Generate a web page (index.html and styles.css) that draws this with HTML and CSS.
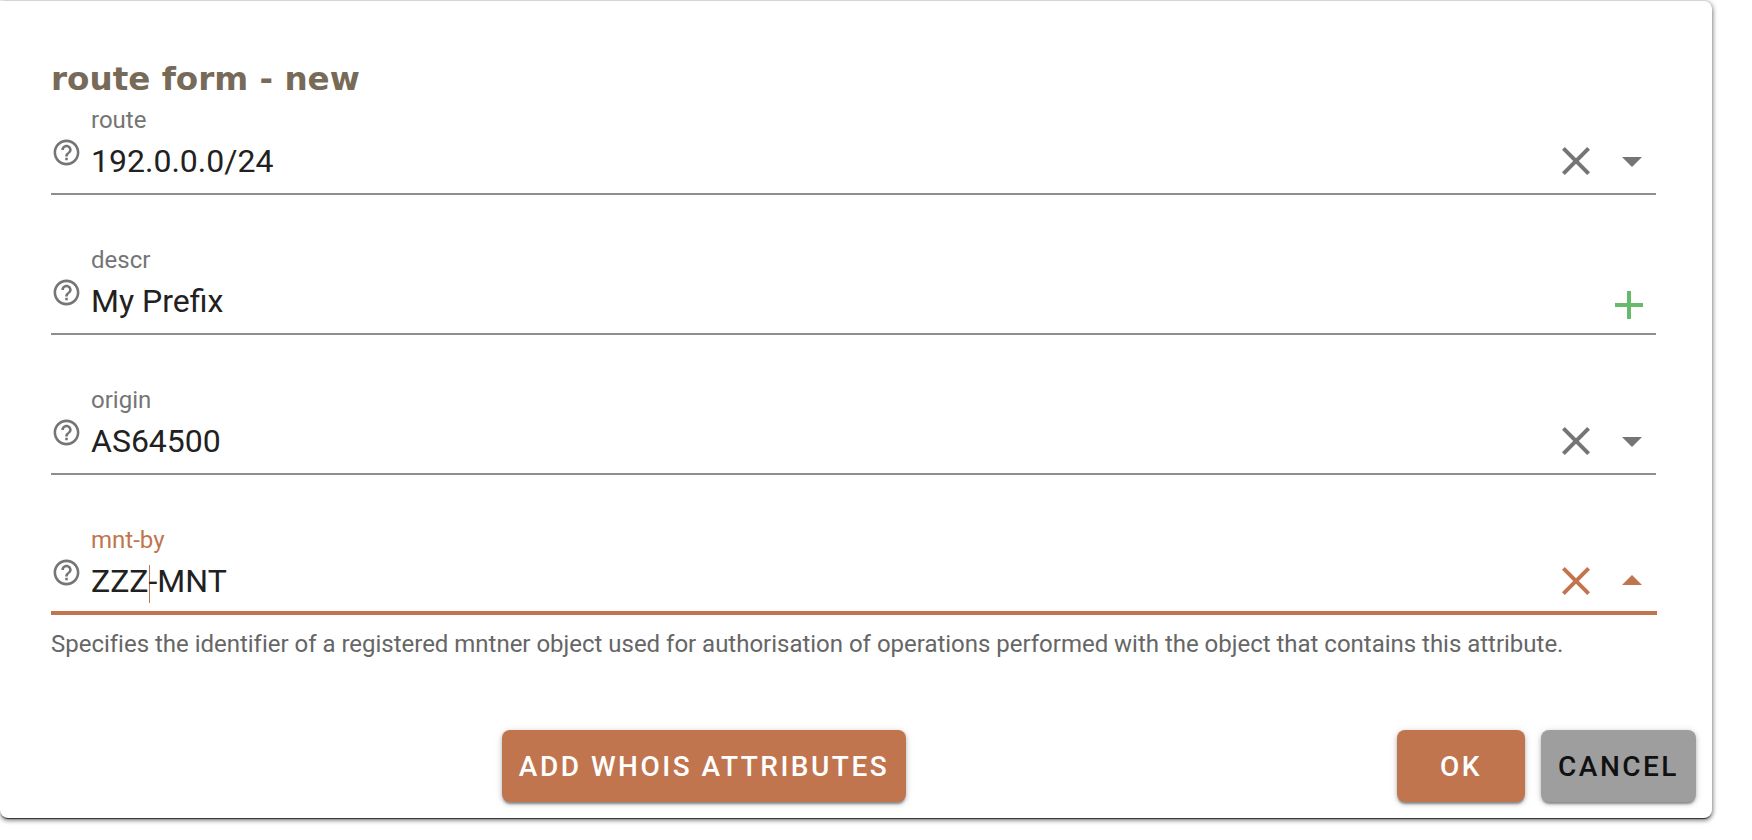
FILE: index.html
```html
<!DOCTYPE html>
<html lang="en">
<head>
<meta charset="utf-8">
<title>route form - new</title>
<link rel="stylesheet" href="styles.css">
</head>
<body>
<main class="card">
  <h2 class="title">route form - new</h2>
  <form class="form">
    <div class="field">
      <svg class="help" viewBox="0 0 24 24"><path d="M11 18h2v-2h-2v2zm1-16C6.48 2 2 6.48 2 12s4.48 10 10 10 10-4.48 10-10S17.52 2 12 2zm0 18c-4.41 0-8-3.59-8-8s3.59-8 8-8 8 3.59 8 8-3.59 8-8 8zm0-14c-2.21 0-4 1.79-4 4h2c0-1.1.9-2 2-2s2 .9 2 2c0 2-3 1.75-3 5h2c0-2.25 3-2.5 3-5 0-2.21-1.79-4-4-4z"/></svg>
      <div class="body">
        <div class="label">route</div>
        <div class="value-row">
          <span class="value">192.0.0.0/24</span>
          <svg class="icon" viewBox="0 0 24 24"><path d="M19 6.41L17.59 5 12 10.59 6.41 5 5 6.41 10.59 12 5 17.59 6.41 19 12 13.41 17.59 19 19 17.59 13.41 12z"/></svg>
          <svg class="icon arrow" viewBox="0 0 24 24"><path d="M7 10l5 5 5-5z"/></svg>
        </div>
      </div>
    </div>
    <div class="field">
      <svg class="help" viewBox="0 0 24 24"><path d="M11 18h2v-2h-2v2zm1-16C6.48 2 2 6.48 2 12s4.48 10 10 10 10-4.48 10-10S17.52 2 12 2zm0 18c-4.41 0-8-3.59-8-8s3.59-8 8-8 8 3.59 8 8-3.59 8-8 8zm0-14c-2.21 0-4 1.79-4 4h2c0-1.1.9-2 2-2s2 .9 2 2c0 2-3 1.75-3 5h2c0-2.25 3-2.5 3-5 0-2.21-1.79-4-4-4z"/></svg>
      <div class="body">
        <div class="label">descr</div>
        <div class="value-row">
          <span class="value">My Prefix</span>
          <svg class="icon plus" viewBox="0 0 24 24"><path d="M19 13h-6v6h-2v-6H5v-2h6V5h2v6h6v2z"/></svg>
        </div>
      </div>
    </div>
    <div class="field">
      <svg class="help" viewBox="0 0 24 24"><path d="M11 18h2v-2h-2v2zm1-16C6.48 2 2 6.48 2 12s4.48 10 10 10 10-4.48 10-10S17.52 2 12 2zm0 18c-4.41 0-8-3.59-8-8s3.59-8 8-8 8 3.59 8 8-3.59 8-8 8zm0-14c-2.21 0-4 1.79-4 4h2c0-1.1.9-2 2-2s2 .9 2 2c0 2-3 1.75-3 5h2c0-2.25 3-2.5 3-5 0-2.21-1.79-4-4-4z"/></svg>
      <div class="body">
        <div class="label">origin</div>
        <div class="value-row">
          <span class="value">AS64500</span>
          <svg class="icon" viewBox="0 0 24 24"><path d="M19 6.41L17.59 5 12 10.59 6.41 5 5 6.41 10.59 12 5 17.59 6.41 19 12 13.41 17.59 19 19 17.59 13.41 12z"/></svg>
          <svg class="icon arrow" viewBox="0 0 24 24"><path d="M7 10l5 5 5-5z"/></svg>
        </div>
      </div>
    </div>
    <div class="field focused">
      <svg class="help" viewBox="0 0 24 24"><path d="M11 18h2v-2h-2v2zm1-16C6.48 2 2 6.48 2 12s4.48 10 10 10 10-4.48 10-10S17.52 2 12 2zm0 18c-4.41 0-8-3.59-8-8s3.59-8 8-8 8 3.59 8 8-3.59 8-8 8zm0-14c-2.21 0-4 1.79-4 4h2c0-1.1.9-2 2-2s2 .9 2 2c0 2-3 1.75-3 5h2c0-2.25 3-2.5 3-5 0-2.21-1.79-4-4-4z"/></svg>
      <div class="body">
        <div class="label">mnt-by</div>
        <div class="value-row">
          <span class="value">ZZZ<span class="caret"></span>-MNT</span>
          <svg class="icon" viewBox="0 0 24 24"><path d="M19 6.41L17.59 5 12 10.59 6.41 5 5 6.41 10.59 12 5 17.59 6.41 19 12 13.41 17.59 19 19 17.59 13.41 12z"/></svg>
          <svg class="icon arrow" viewBox="0 0 24 24"><path d="M7 14l5-5 5 5z"/></svg>
        </div>
      </div>
    </div>
    <p class="hint">Specifies the identifier of a registered mntner object used for authorisation of operations performed with the object that contains this attribute.</p>
  </form>
  <div class="actions">
    <div class="action-main"><button class="btn primary" type="button">Add whois attributes</button></div>
    <button class="btn primary ok" type="button">OK</button>
    <button class="btn muted" type="button">Cancel</button>
  </div>
</main>
</body>
</html>
```
FILE: styles.css
```css
* { box-sizing: border-box; }
html, body { margin: 0; height: 100%; background: #fff; overflow: hidden; }
body { font-family: Roboto, "Liberation Sans", sans-serif; }

.card {
  width: 1712px;
  height: 817px;
  margin-top: 1px;
  padding: 0 16px 0 51px;
  background: #fff;
  border-radius: 0 8px 8px 8px;
  box-shadow: 0 2px 1px -1px rgba(0,0,0,.7), 0 3px 4px rgba(0,0,0,.4), 2px 0 4px rgba(0,0,0,.2), 0 -1px 1px rgba(0,0,0,.08);
  display: flex;
  flex-direction: column;
}

.title {
  margin: 0;
  padding-top: 58px;
  height: 110px;
  font: 700 32.6px/40px "DejaVu Sans", sans-serif;
  color: #786a58;
}

.form { margin-right: 40px; }

.field {
  display: flex;
  height: 84px;
  border-bottom: 2px solid #8e8e8e;
  margin-bottom: 56px;
  color: #757575;
}
.field.focused {
  margin-bottom: 0;
  margin-right: -1px;
  border-bottom: 4px solid #c1754f;
}
.field.focused .label { color: #c1754f; }
.field.focused .icon { fill: #c1754f; }
.field.focused .arrow { margin-right: 1px; }

.help { width: 31px; height: 31px; margin: 26px 9px 0 0; flex: none; fill: #757575; }
.body { flex: 1; min-width: 0; }
.label { font-size: 24px; line-height: 18px; height: 26px; }
.value-row { display: flex; align-items: center; height: 48px; }
.value { flex: 1; font-size: 32px; line-height: 48px; color: #212121; }
.caret { display: inline-block; width: 0; height: 38px; margin-right: -1px; border-left: 1px solid #c1754f; vertical-align: middle; }
.icon { width: 48px; height: 48px; flex: none; fill: #757575; }
.arrow { margin-left: 8px; }
.icon.plus { fill: #66bb6a; margin-right: 3px; margin-top: 8px; }

.hint {
  margin: 16px 0 0;
  font-size: 24px;
  line-height: 26px;
  letter-spacing: -.015px;
  color: #666;
}

.actions { display: flex; align-items: flex-start; margin-top: 73px; }
.action-main { flex: 1; display: flex; justify-content: center; }
.btn {
  height: 72px;
  padding: 2px 17px 0;
  border: 0;
  border-radius: 8px;
  font: 500 28px/70px Roboto, sans-serif;
  letter-spacing: 2.5px;
  text-transform: uppercase;
  box-shadow: 0 3px 2px -1px rgba(0,0,0,.3), 0 2px 4px rgba(0,0,0,.2), 0 1px 8px rgba(0,0,0,.12);
}
.primary { background: #c1754f; color: #fff; }
.muted { background: #9e9e9e; color: #111; }
.ok { width: 128px; margin-left: 40px; }
.muted { width: 155px; margin-left: 16px; padding: 2px 0 0; }
```
